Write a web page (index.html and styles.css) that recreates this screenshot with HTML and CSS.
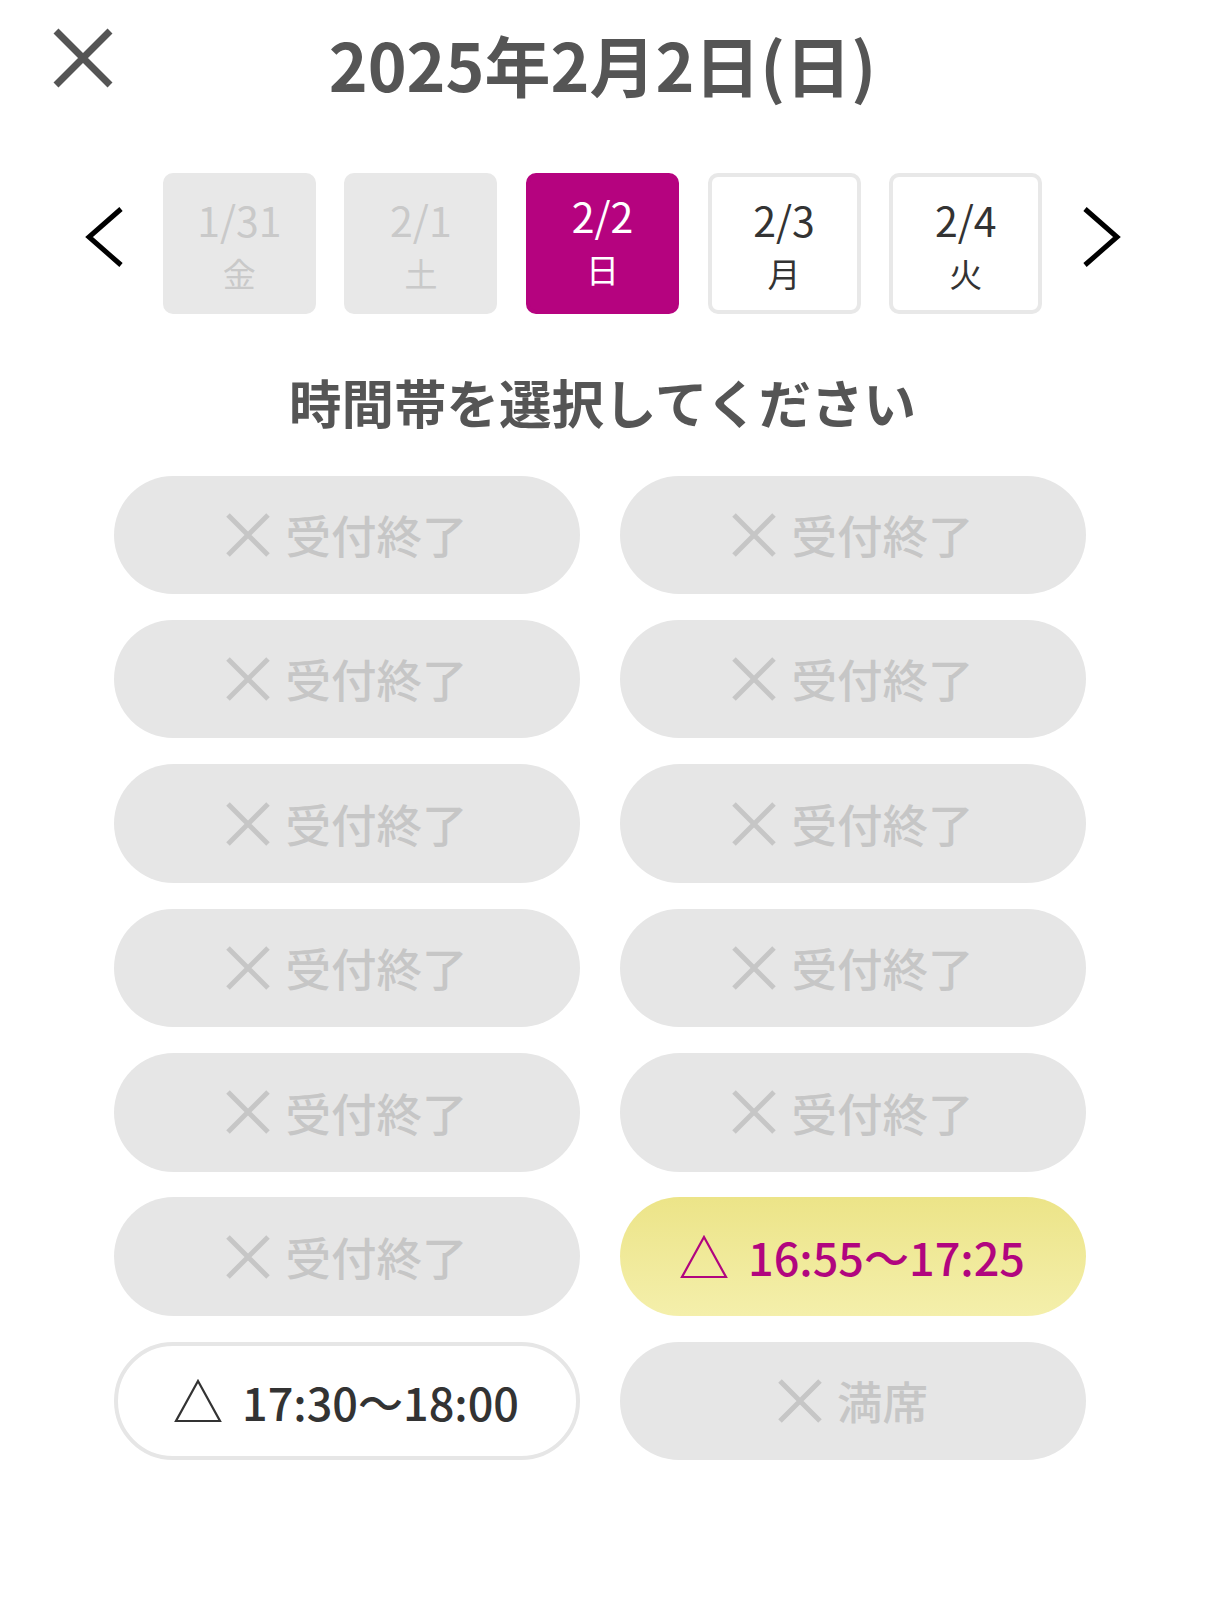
FILE: index.html
```html
<!DOCTYPE html>
<html lang="ja">
<head>
    <meta charset="UTF-8">
    <meta name="viewport" content="width=device-width, initial-scale=1.0">
    <title>時間帯選択</title>
    <link rel="stylesheet" href="styles.css">
</head>
<body>
    <div class="page">
        <header class="header">
            <button class="close" aria-label="閉じる">
                <svg width="60" height="60" viewBox="0 0 60 60">
                    <path d="M3 3 L57 57 M57 3 L3 57" stroke="#555" stroke-width="7" fill="none"/>
                </svg>
            </button>
            <h1 class="title">2025年2月2日(日)</h1>
            <span></span>
        </header>

        <nav class="dates">
            <button class="chevron" aria-label="前へ">
                <svg width="50" height="62" viewBox="0 0 50 62">
                    <path d="M37 3 L5 31 L37 59" stroke="#000" stroke-width="5" fill="none"/>
                </svg>
            </button>
            <div class="day day-off"><span class="day-date">1/31</span><span class="day-week">金</span></div>
            <div class="day day-off"><span class="day-date">2/1</span><span class="day-week">土</span></div>
            <div class="day day-active"><span class="day-date">2/2</span><span class="day-week">日</span></div>
            <div class="day"><span class="day-date">2/3</span><span class="day-week">月</span></div>
            <div class="day"><span class="day-date">2/4</span><span class="day-week">火</span></div>
            <button class="chevron" aria-label="次へ">
                <svg width="50" height="62" viewBox="0 0 50 62">
                    <path d="M14 3 L46 31 L14 59" stroke="#000" stroke-width="5" fill="none"/>
                </svg>
            </button>
        </nav>

        <h2 class="lead">時間帯を選択してください</h2>

        <div class="slots" id="slots"></div>
    </div>

    <script>
        const slots = [
            { state: 'closed', label: '受付終了' },
            { state: 'closed', label: '受付終了' },
            { state: 'closed', label: '受付終了' },
            { state: 'closed', label: '受付終了' },
            { state: 'closed', label: '受付終了' },
            { state: 'closed', label: '受付終了' },
            { state: 'closed', label: '受付終了' },
            { state: 'closed', label: '受付終了' },
            { state: 'closed', label: '受付終了' },
            { state: 'closed', label: '受付終了' },
            { state: 'closed', label: '受付終了' },
            { state: 'few selected', label: '16:55〜17:25' },
            { state: 'few', label: '17:30〜18:00' },
            { state: 'closed', label: '満席' }
        ];

        const crossIcon = `
            <svg class="slot-icon" width="46" height="46" viewBox="0 0 46 46">
                <path d="M3 3 L43 43 M43 3 L3 43" stroke="currentColor" stroke-width="5" fill="none"/>
            </svg>`;
        const triangleIcon = `
            <svg class="slot-icon" width="48" height="44" viewBox="0 0 48 44">
                <path d="M24 2 L46 42 L2 42 Z" stroke="currentColor" stroke-width="2.2" fill="none"/>
            </svg>`;

        document.getElementById('slots').innerHTML = slots.map(slot => {
            const icon = slot.state === 'closed' ? crossIcon : triangleIcon;
            const cls = slot.state.split(' ').map(s => 'slot-' + s).join(' ');
            return `<button class="slot ${cls}">${icon}<span class="slot-label">${slot.label}</span></button>`;
        }).join('');
    </script>
</body>
</html>
```

FILE: styles.css
```css
* {
    box-sizing: border-box;
    margin: 0;
    padding: 0;
}

body {
    font-family: 'Noto Sans CJK JP', 'Noto Sans', sans-serif;
    background-color: #fff;
    color: #333;
}

button {
    font-family: inherit;
    border: none;
    background: none;
    cursor: pointer;
}

.page {
    width: 1205px;
}

.header {
    display: grid;
    grid-template-columns: 1fr auto 1fr;
    align-items: center;
    height: 128px;
}

.close {
    justify-self: start;
    align-self: start;
    margin: 28px 0 0 53px;
    display: flex;
}

.title {
    font-size: 66px;
    font-weight: 700;
    color: #555;
    line-height: 1.2;
}

.dates {
    display: flex;
    justify-content: center;
    align-items: center;
    gap: 28.6px;
    margin-top: 45px;
}

.chevron {
    display: flex;
    margin-bottom: 13px;
}

.day {
    width: 153px;
    height: 141px;
    border: 4px solid #e8e8e8;
    border-radius: 10px;
    background: #fff;
    color: #333;
    display: flex;
    flex-direction: column;
    align-items: center;
    justify-content: center;
}

.day-date {
    font-size: 41px;
    line-height: 59px;
}

.day-week {
    font-size: 33px;
    line-height: 49px;
}

.day-off {
    background: #e8e8e8;
    color: #c9c9c9;
}

.day-active {
    background: #b5037f;
    border-color: #b5037f;
    color: #fff;
    padding-bottom: 8px;
}

.lead {
    margin-top: 56px;
    text-align: center;
    font-size: 52.5px;
    line-height: 62px;
    font-weight: 700;
    color: #555;
}

.slots {
    display: grid;
    grid-template-columns: 466px 466px;
    grid-auto-rows: 118.5px;
    justify-content: center;
    column-gap: 40px;
    row-gap: 25.9px;
    margin-top: 43.5px;
    padding-right: 6px;
}

.slot {
    display: flex;
    align-items: center;
    justify-content: center;
    gap: 14px;
    border-radius: 60px;
    background: #e6e6e6;
    color: #c6c6c6;
}

.slot-label {
    font-size: 45.5px;
    font-weight: 500;
    line-height: 1;
}

.slot-few {
    gap: 20px;
    background: #fff;
    border: 4px solid #e6e6e6;
    color: #333;
}

.slot-few .slot-label {
    font-size: 45px;
}

.slot-few.slot-selected {
    border: none;
    background: linear-gradient(#ece488, #f4efab);
    color: #b1057f;
}
```
